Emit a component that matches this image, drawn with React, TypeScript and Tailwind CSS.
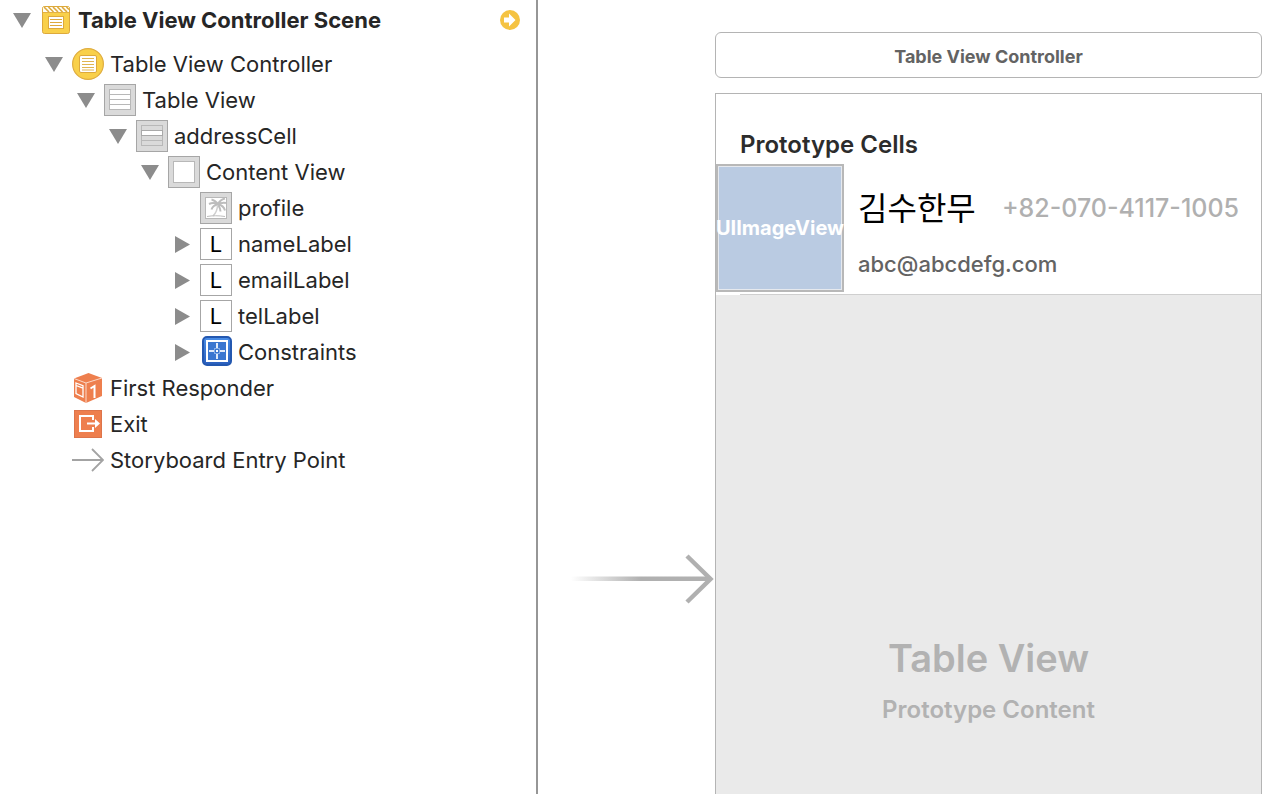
import { useState } from "react";
import type { ReactNode } from "react";

type TreeNode = {
  label: string;
  icon: ReactNode;
  children?: TreeNode[];
  expandable?: boolean;
};

function Icon({ children }: { children: ReactNode }) {
  return (
    <svg viewBox="0 0 32 32" className="size-8 shrink-0" aria-hidden="true">
      {children}
    </svg>
  );
}

function Tile({ children }: { children: ReactNode }) {
  return (
    <Icon>
      <rect x="0.5" y="0.5" width="31" height="31" fill="#dadada" stroke="#a6a6a6" />
      {children}
    </Icon>
  );
}

const sceneIcon = (
  <Icon>
    <rect x="2.5" y="2.5" width="27" height="27" rx="2" fill="#f9d04a" stroke="#dda93c" />
    <rect x="3" y="3" width="26" height="5" fill="#fffdf5" />
    <path d="M4 3l5 5M8.500 3l5 5M13 3l5 5M17.500 3l5 5M22 3l5 5M26.500 3l2.500 2.500" stroke="#dda93c" strokeWidth="1.600" />
    <path d="M3 8.500h26" stroke="#e3b143" />
    <rect x="8.500" y="12.500" width="15" height="12" fill="#fff" stroke="#dda93c" />
    <path d="M10 15.500h12M10 18.500h12M10 21.500h12" stroke="#dda93c" />
  </Icon>
);

const controllerIcon = (
  <Icon>
    <circle cx="16" cy="16" r="15.400" fill="#f9d04a" stroke="#dfad40" strokeWidth="1.200" />
    <rect x="7.500" y="7.500" width="17" height="17" rx="1.500" fill="#fff" stroke="#dda93c" />
    <path d="M10 10.500h12M10 13.500h12M10 16.500h12M10 19.500h12M10 22h12" stroke="#e0b552" />
  </Icon>
);

const tableIcon = (
  <Tile>
    <rect x="5.500" y="5.500" width="21" height="20" fill="#fff" stroke="#b8b8b8" />
    <path d="M5.500 10.500h21M5.500 15.500h21M5.500 20.500h21" stroke="#b8b8b8" />
  </Tile>
);

const cellIcon = (
  <Tile>
    <rect x="5.500" y="5.500" width="21" height="20" fill="#dadada" stroke="#b8b8b8" />
    <rect x="5.500" y="10.500" width="21" height="5" fill="#fff" stroke="#a9a9a9" />
    <path d="M5.500 20.500h21" stroke="#b8b8b8" />
  </Tile>
);

const viewIcon = (
  <Tile>
    <rect x="5.500" y="5.500" width="21" height="21" fill="#fff" stroke="#b8b8b8" />
  </Tile>
);

const imageIcon = (
  <Tile>
    <rect x="5.500" y="5.500" width="21" height="21" fill="#fff" stroke="#b8b8b8" />
    <path
      d="M18 12.500C16 9.500 14 8 11.500 7.500M18 12.500c-3-2-6-2-9-.500M18 12.500c-3 .3-5.500 2-6.500 5M18 12.500c1-3 3-5 7-6M18 12.500c3-2 5.500-2 8-1.500M18 12.500c3.500.5 6 2.500 7 6M18 12.500c1.500 2.500 2.500 4.500 2.500 7"
      fill="none"
      stroke="#bdbdbd"
      strokeWidth="2"
    />
    <path d="M17.500 13c0 4-1.500 8-4.500 11" fill="none" stroke="#cfcfcf" strokeWidth="1.500" />
    <path d="M7 24.500c5-1 12-1 18 0" fill="none" stroke="#bdbdbd" />
  </Tile>
);

const labelIcon = (
  <span
    aria-hidden="true"
    className="flex size-8 shrink-0 items-center justify-center border border-[#a6a6a6] bg-white text-[22px] leading-8 text-black"
  >
    L
  </span>
);

const constraintsIcon = (
  <Icon>
    <defs>
      <linearGradient id="blueFill" x1="0" y1="0" x2="0" y2="1">
        <stop offset="0" stopColor="#4a8ee8" />
        <stop offset="1" stopColor="#2a5fbd" />
      </linearGradient>
    </defs>
    <rect x="3" y="1" width="28" height="28" rx="4" fill="url(#blueFill)" stroke="#2458b0" strokeWidth="2" />
    <rect x="7" y="5" width="20" height="20" fill="#3a76d0" stroke="#fff" strokeWidth="2" />
    <path d="M9 15h5M20 15h5M17 7v5M17 18v5" stroke="#dfe9f9" strokeWidth="2" />
    <path d="M14 12.500h6M14 17.500h6M14.500 12v6M19.500 12v6" stroke="#86aee8" />
    <rect x="16" y="14" width="2" height="2" fill="#fff" />
  </Icon>
);

const responderIcon = (
  <Icon>
    <path d="M2 6.500L16.500 1 30 6v18L14 31 2 25z" fill="#ee7f4e" />
    <path d="M2 6.500L14 11l16-5M14 11v20" fill="none" stroke="#fbd9c9" strokeWidth="1" />
    <path d="M4 11l7 2.700v11.300l-7-3.300zM4 13.500l7 2.700" fill="none" stroke="#fff" strokeWidth="1.300" />
    <path d="M18.500 16.500l4-2.500v12" fill="none" stroke="#fff" strokeWidth="2" />
  </Icon>
);

const exitIcon = (
  <Icon>
    <rect x="2.500" y="2.500" width="27" height="27" fill="#ee7f4e" stroke="#dd744a" />
    <path d="M21 12V8H8v15h13v-4" fill="none" stroke="#fff" strokeWidth="2" />
    <path d="M15 15.500h9" stroke="#fff" strokeWidth="2" />
    <path d="M23 11l5 4.500-5 4.500z" fill="#fff" />
  </Icon>
);

const entryIcon = (
  <Icon>
    <path d="M0 16h31M20 5l11 11-11 11" fill="none" stroke="#a3a3a3" strokeWidth="1.800" />
  </Icon>
);

const scene: TreeNode[] = [
  {
    label: "Table View Controller",
    icon: controllerIcon,
    children: [
      {
        label: "Table View",
        icon: tableIcon,
        children: [
          {
            label: "addressCell",
            icon: cellIcon,
            children: [
              {
                label: "Content View",
                icon: viewIcon,
                children: [
                  { label: "profile", icon: imageIcon },
                  { label: "nameLabel", icon: labelIcon, expandable: true },
                  { label: "emailLabel", icon: labelIcon, expandable: true },
                  { label: "telLabel", icon: labelIcon, expandable: true },
                  { label: "Constraints", icon: constraintsIcon, expandable: true },
                ],
              },
            ],
          },
        ],
      },
    ],
  },
  { label: "First Responder", icon: responderIcon },
  { label: "Exit", icon: exitIcon },
  { label: "Storyboard Entry Point", icon: entryIcon },
];

function Disclosure({ label, open, onToggle }: { label: string; open: boolean; onToggle: () => void }) {
  return (
    <button
      type="button"
      aria-label={label}
      aria-expanded={open}
      onClick={onToggle}
      className="flex h-8 w-5 shrink-0 items-center justify-center"
    >
      <svg viewBox="0 0 20 20" className="size-5" aria-hidden="true">
        <path d={open ? "M1 3h18L10 18z" : "M3 2v17L18 10.500z"} fill="#8c8c8c" />
      </svg>
    </button>
  );
}

function Branch({ node }: { node: TreeNode }) {
  const [open, setOpen] = useState(Boolean(node.children));
  return (
    <li>
      <div className="flex h-9 items-center">
        {node.children || node.expandable ? (
          <Disclosure label={node.label} open={open} onToggle={() => setOpen(!open)} />
        ) : (
          <span className="w-5 shrink-0" />
        )}
        <span className="ml-2 flex">{node.icon}</span>
        <span className="ml-1.5 whitespace-nowrap">{node.label}</span>
      </div>
      {open && node.children && (
        <ul className="pl-8">
          {node.children.map((child) => (
            <Branch key={child.label} node={child} />
          ))}
        </ul>
      )}
    </li>
  );
}

function Outline() {
  const [open, setOpen] = useState(true);
  return (
    <nav
      aria-label="Document outline"
      className="w-5/12 max-w-[538px] shrink-0 grow border-r-2 border-[#969696] pl-3 text-[22px] leading-7 text-[#262626]"
    >
      <div className="flex h-10 items-center">
        <Disclosure label="Table View Controller Scene" open={open} onToggle={() => setOpen(!open)} />
        <span className="ml-2 flex">{sceneIcon}</span>
        <h1 className="ml-1.5 whitespace-nowrap font-bold">Table View Controller Scene</h1>
        <button type="button" aria-label="Go to scene" className="mr-4 ml-auto">
          <svg viewBox="0 0 20 20" className="size-5" aria-hidden="true">
            <circle cx="10" cy="10" r="10" fill="#f5c342" />
            <path d="M4 7.500h5V3.500l6.500 6.500L9 16.500v-4H4z" fill="#fff" />
          </svg>
        </button>
      </div>
      {open && (
        <ul className="pt-1.5 pl-8">
          {scene.map((node) => (
            <Branch key={node.label} node={node} />
          ))}
        </ul>
      )}
    </nav>
  );
}

function EntryArrow() {
  return (
    <svg viewBox="0 0 144 50" className="h-[50px] w-36" aria-hidden="true">
      <defs>
        <linearGradient id="fade" x1="0" x2="1">
          <stop offset="0" stopColor="#b0b0b0" stopOpacity="0" />
          <stop offset="0.500" stopColor="#b0b0b0" />
        </linearGradient>
      </defs>
      <rect x="0" y="22.500" width="140" height="4.500" fill="url(#fade)" />
      <path d="M116 2l23.500 23L116 48" fill="none" stroke="#b0b0b0" strokeWidth="4.500" />
    </svg>
  );
}

function Canvas() {
  return (
    <main className="flex min-w-0 flex-1 pr-[26px]">
      <div className="flex w-[177px] shrink-0 justify-end pt-[554px]">
        <EntryArrow />
      </div>
      <section className="flex min-w-0 flex-1 flex-col pt-8">
        <h2 className="mb-[15px] rounded-md border border-[#b4b4b4] pt-1 text-center text-[18px] leading-10 font-bold text-[#636363]">
          Table View Controller
        </h2>
        <div className="flex flex-1 flex-col border border-b-0 border-[#b4b4b4] bg-[#eaeaea]">
          <div className="bg-white pt-8">
            <h3 className="pl-6 text-[24px] leading-[38px] font-semibold text-[#2c2c2c]">Prototype Cells</h3>
            <div className="flex">
              <div className="flex size-32 shrink-0 items-center justify-center border-2 border-[#b8b8b8] bg-[#bacbe2] text-[20px] font-bold text-white inset-ring inset-ring-[#e6e9ee]">
                UIImageView
              </div>
              <div className="min-w-0 flex-1 pt-5 pr-[22px] pl-3.5">
                <div className="flex h-[50px] items-center justify-between whitespace-nowrap">
                  <span lang="ko" className="pb-1.5 font-['Noto_Sans_CJK_KR',sans-serif] text-[32px] text-black">
                    김수한무
                  </span>
                  <span className="text-[25px] font-medium text-[#b0b0b0]">+82-070-4117-1005</span>
                </div>
                <p className="pt-3.5 text-[22px] leading-8 font-medium text-[#636363]">abc@abcdefg.com</p>
              </div>
            </div>
            <div className="mt-0.5 ml-6 border-b border-[#cfcfcf]" />
          </div>
          <div className="pt-[335px] text-center font-semibold text-[#b2b2b2]">
            <p className="text-[38px] leading-[56px]">Table View</p>
            <p className="pt-1 text-[24px] leading-10">Prototype Content</p>
          </div>
        </div>
      </section>
    </main>
  );
}

export default function App() {
  return (
    <div className="flex min-h-screen bg-white font-['Inter','Noto_Sans_CJK_KR',sans-serif]">
      <Outline />
      <Canvas />
    </div>
  );
}
